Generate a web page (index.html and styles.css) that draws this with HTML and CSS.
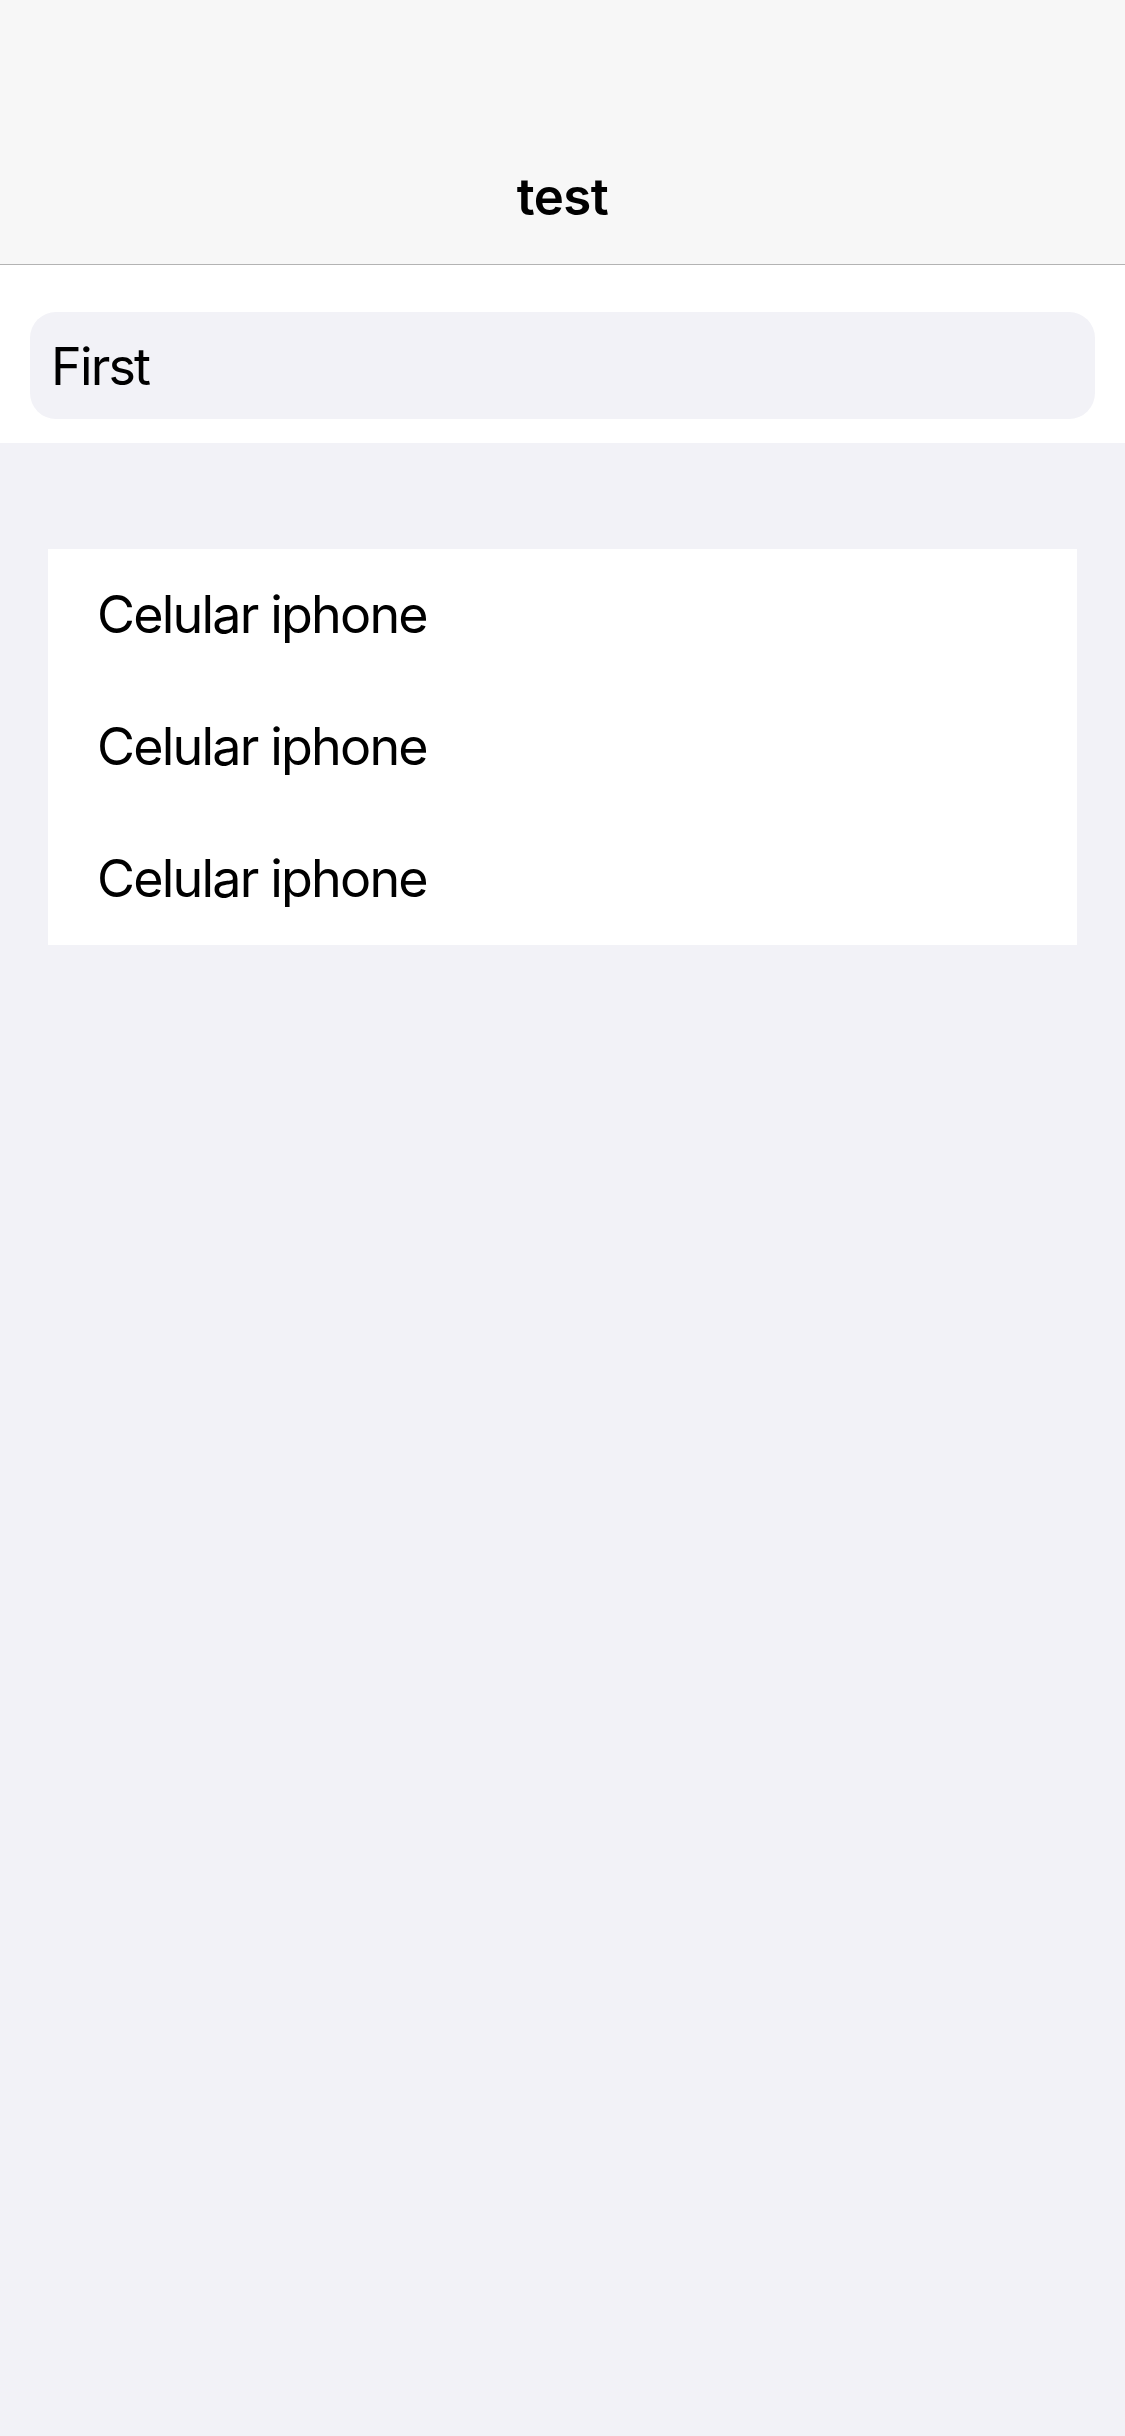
FILE: index.html
```html
<!DOCTYPE html>
<html lang="en">
<head>
<meta charset="utf-8">
<title>test</title>
<link rel="stylesheet" href="styles.css">
</head>
<body>
<header class="navbar">
  <h1 class="nav-title">test</h1>
</header>
<section class="search-section">
  <div class="search-field">First</div>
</section>
<main class="content">
  <ul class="list-card">
    <li class="list-row">Celular iphone</li>
    <li class="list-row">Celular iphone</li>
    <li class="list-row">Celular iphone</li>
  </ul>
</main>
</body>
</html>
```

FILE: styles.css
```css
html, body {
  margin: 0;
  padding: 0;
}
body {
  background: #f2f2f7;
  font-family: Inter, "Noto Sans", "Liberation Sans", sans-serif;
  color: #000;
  min-height: 2436px;
}
.navbar {
  box-sizing: border-box;
  height: 265px;
  padding-top: 166px;
  background: #f7f7f7;
  border-bottom: 1px solid #b3b3b3;
}
.nav-title {
  margin: 0;
  text-align: center;
  font-size: 51px;
  line-height: 62px;
  font-weight: 600;
  letter-spacing: -0.5px;
}
.search-section {
  background: #fff;
  padding: 47px 30px 24px;
}
.search-field {
  box-sizing: border-box;
  height: 107px;
  background: #f2f2f7;
  border-radius: 26px;
  padding: 2px 0 0 21px;
  font-size: 52px;
  line-height: 105px;
  letter-spacing: -1.8px;
}
.content {
  padding: 106px 48px 0;
}
.list-card {
  list-style: none;
  margin: 0;
  padding: 0;
  background: #fff;
}
.list-row {
  height: 132px;
  line-height: 132px;
  padding-left: 49px;
  font-size: 52px;
  letter-spacing: -1.8px;
}
```
